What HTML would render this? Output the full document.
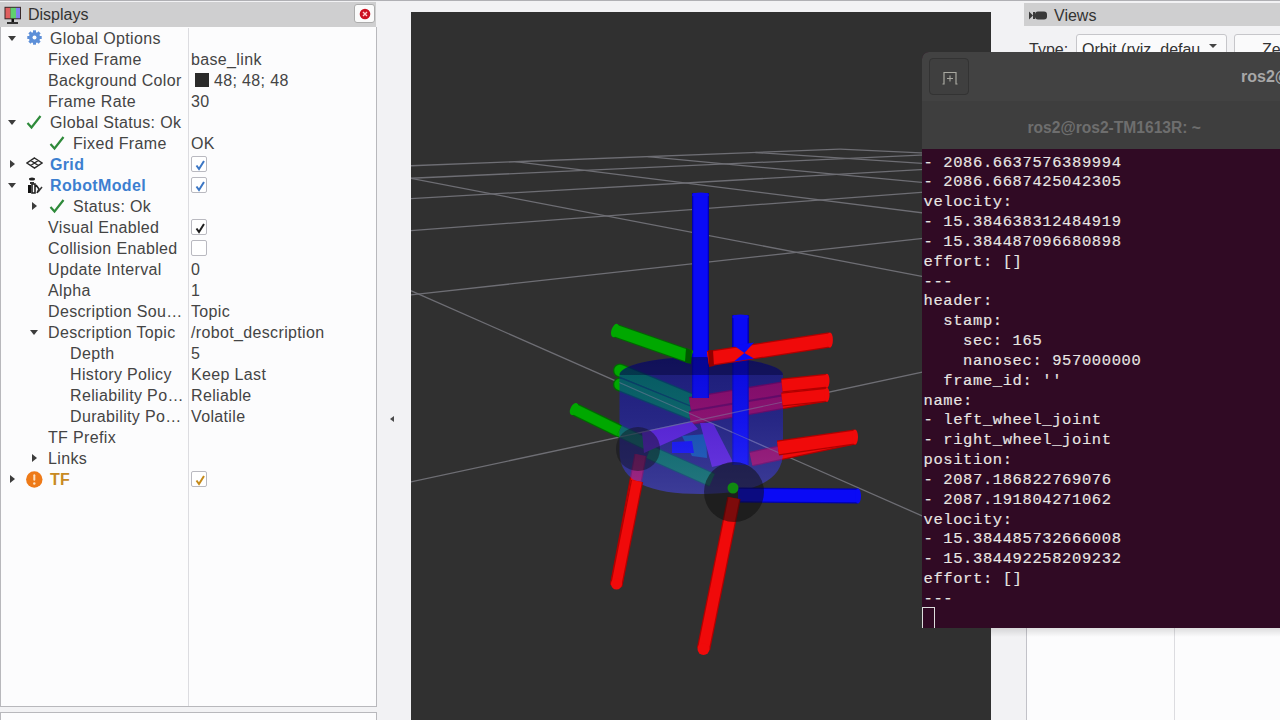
<!DOCTYPE html>
<html><head><meta charset="utf-8">
<style>
*{margin:0;padding:0;box-sizing:border-box}
html,body{width:1280px;height:720px;overflow:hidden;background:#f2f2f4;font-family:"Liberation Sans",sans-serif;position:relative}
.abs{position:absolute}
#disp{left:0;top:0;width:377px;height:720px}
#dhdr{left:0px;top:2px;width:376px;height:25.5px;background:#cfcfd0}
#dtree{left:0;top:27px;width:377px;height:680px;background:#fcfcfd;border:1px solid #b8b8bc;border-top:none}
#dbot{left:0;top:712px;width:377px;height:10px;background:#fcfcfd;border:1px solid #b8b8bc}
.row{position:absolute;left:0;height:21px;line-height:21px;font-size:16px;color:#444;white-space:nowrap;letter-spacing:0.35px}
.t{position:absolute;top:0}
.v{position:absolute;top:0;left:191px}
.b{font-weight:bold;color:#3c7fd0}
.arr-d{position:absolute;width:0;height:0;border-left:4px solid transparent;border-right:4px solid transparent;border-top:5px solid #3c3c3c;top:7.5px}
.arr-r{position:absolute;width:0;height:0;border-top:4.5px solid transparent;border-bottom:4.5px solid transparent;border-left:5px solid #3c3c3c;top:6px}
.chk{position:absolute;top:1.5px;left:191px;width:16px;height:16px;border:1px solid #b9b9c0;border-radius:2px;background:#fff}
.chk svg{position:absolute;left:2px;top:2px}
#view3d{left:411px;top:12px;width:580px;height:708px;background:#303030;overflow:hidden}
#term{left:922px;top:52px;width:358px;height:576px;background:#300a24;border-radius:7px 0 0 0;overflow:hidden}
#thdr{left:0;top:0;width:358px;height:97px;background:#3b3b3b}
.tl{position:absolute;left:1.5px;-webkit-text-stroke:0.15px #e8e6e3;font-family:"Liberation Mono",monospace;font-size:15.5px;letter-spacing:0.6px;color:#e8e6e3;white-space:pre;height:20px;line-height:20px}
</style></head><body>
<!-- Displays panel -->
<div class="abs" style="left:0;top:0;width:1280px;height:1px;background:#b0b0b4"></div>
<div id="dhdr" class="abs"></div>
<div id="dtree" class="abs"></div>
<div id="dbot" class="abs"></div>
<div class="abs" style="left:188px;top:28px;width:1px;height:678px;background:#dcdce0"></div>
<div class="abs" style="left:28px;top:6px;font-size:16px;color:#333;line-height:18px">Displays</div>
<svg class="abs" style="left:3px;top:6px" width="20" height="19" viewBox="0 0 20 19"><rect x="1.5" y="0.8" width="16.5" height="12.5" fill="#3a2a2a"/><rect x="2.5" y="1.8" width="5" height="10.5" fill="#e06060"/><rect x="7.5" y="1.8" width="5.5" height="10.5" fill="#60d070"/><rect x="13" y="1.8" width="4" height="10.5" fill="#8080ee"/><rect x="8.5" y="13" width="2.5" height="3" fill="#111"/><rect x="4" y="16" width="11" height="2" fill="#333"/></svg>
<div class="abs" style="left:354px;top:4px;width:21px;height:19px;background:#fbfbfb;border:1.5px solid #acacac;border-radius:3px"></div>
<svg class="abs" style="left:359px;top:7.5px" width="12" height="12" viewBox="0 0 12 12"><circle cx="6" cy="6" r="5.3" fill="#cc1020"/><path d="M4 4 L8 8 M8 4 L4 8" stroke="#ffd0d0" stroke-width="1.4"/></svg>
<div class="abs" style="left:390px;top:416px;width:0;height:0;border-top:3.75px solid transparent;border-bottom:3.75px solid transparent;border-right:4.5px solid #4a4a4a"></div>


<div id="rows" class="abs" style="left:0;top:0;width:376px;height:720px">
<div class="row" style="top:28px;width:376px"><i class="arr-d" style="left:8px"></i><svg class="abs" style="left:27px;top:2px" width="15" height="15" viewBox="0 0 15 15"><g fill="#5d8fd8"><circle cx="7.5" cy="7.5" r="5.6"/><rect x="6" y="0.3" width="3" height="3.2" transform="rotate(0 7.5 7.5)"/><rect x="6" y="0.3" width="3" height="3.2" transform="rotate(45 7.5 7.5)"/><rect x="6" y="0.3" width="3" height="3.2" transform="rotate(90 7.5 7.5)"/><rect x="6" y="0.3" width="3" height="3.2" transform="rotate(135 7.5 7.5)"/><rect x="6" y="0.3" width="3" height="3.2" transform="rotate(180 7.5 7.5)"/><rect x="6" y="0.3" width="3" height="3.2" transform="rotate(225 7.5 7.5)"/><rect x="6" y="0.3" width="3" height="3.2" transform="rotate(270 7.5 7.5)"/><rect x="6" y="0.3" width="3" height="3.2" transform="rotate(315 7.5 7.5)"/></g><circle cx="7.5" cy="7.5" r="2" fill="#fff"/></svg><span class="t" style="left:50px">Global Options</span></div>
<div class="row" style="top:49px;width:376px"><span class="t" style="left:48px">Fixed Frame</span><span class="v">base_link</span></div>
<div class="row" style="top:70px;width:376px"><span class="t" style="left:48px">Background Color</span><span class="v" style="left:214px">48; 48; 48</span><i class="abs" style="left:195px;top:3px;width:14px;height:14px;background:#2a2a2a"></i></div>
<div class="row" style="top:91px;width:376px"><span class="t" style="left:48px">Frame Rate</span><span class="v">30</span></div>
<div class="row" style="top:112px;width:376px"><i class="arr-d" style="left:8px"></i><svg class="abs" style="left:26px;top:2px" width="16" height="16" viewBox="0 0 16 16"><path d="M1.5 9 L5.5 13.5 L14.5 2" fill="none" stroke="#2e8a3a" stroke-width="2.2"/></svg><span class="t" style="left:50px">Global Status: Ok</span></div>
<div class="row" style="top:133px;width:376px"><svg class="abs" style="left:49px;top:2px" width="16" height="16" viewBox="0 0 16 16"><path d="M1.5 9 L5.5 13.5 L14.5 2" fill="none" stroke="#2e8a3a" stroke-width="2.2"/></svg><span class="t" style="left:73px">Fixed Frame</span><span class="v">OK</span></div>
<div class="row" style="top:154px;width:376px"><i class="arr-r" style="left:10px"></i><svg class="abs" style="left:26px;top:3px" width="17" height="12" viewBox="0 0 17 12"><path d="M8.5 1 L16 6 L8.5 11 L1 6 Z M4.75 3.5 L12.25 8.5 M12.25 3.5 L4.75 8.5" fill="none" stroke="#2a2a2a" stroke-width="1.5"/></svg><span class="t b" style="left:50px">Grid</span><i class="chk"><svg width="12" height="12" viewBox="0 0 12 12"><path d="M2.5 6.5 L5 10 L10 2" fill="none" stroke="#3b76c4" stroke-width="2"/></svg></i></div>
<div class="row" style="top:175px;width:376px"><i class="arr-d" style="left:8px"></i><svg class="abs" style="left:26px;top:1px" width="18" height="18" viewBox="0 0 18 18"><ellipse cx="6" cy="3" rx="3" ry="1.5" fill="#222"/><rect x="2" y="9" width="3" height="8" fill="#111"/><path d="M6 8 L9 8 L9 17 L6 17 Z M10 9 L13 13 L11 17" fill="none" stroke="#222" stroke-width="1.6"/><path d="M12 16 L16 11" stroke="#333" stroke-width="1.5"/><rect x="4" y="6" width="4" height="2" fill="#333"/></svg><span class="t b" style="left:50px">RobotModel</span><i class="chk"><svg width="12" height="12" viewBox="0 0 12 12"><path d="M2.5 6.5 L5 10 L10 2" fill="none" stroke="#3b76c4" stroke-width="2"/></svg></i></div>
<div class="row" style="top:196px;width:376px"><i class="arr-r" style="left:32px"></i><svg class="abs" style="left:49px;top:2px" width="16" height="16" viewBox="0 0 16 16"><path d="M1.5 9 L5.5 13.5 L14.5 2" fill="none" stroke="#2e8a3a" stroke-width="2.2"/></svg><span class="t" style="left:73px">Status: Ok</span></div>
<div class="row" style="top:217px;width:376px"><span class="t" style="left:48px">Visual Enabled</span><i class="chk"><svg width="12" height="12" viewBox="0 0 12 12"><path d="M2.5 6.5 L5 10 L10 2" fill="none" stroke="#1e1e1e" stroke-width="2"/></svg></i></div>
<div class="row" style="top:238px;width:376px"><span class="t" style="left:48px">Collision Enabled</span><i class="chk"></i></div>
<div class="row" style="top:259px;width:376px"><span class="t" style="left:48px">Update Interval</span><span class="v">0</span></div>
<div class="row" style="top:280px;width:376px"><span class="t" style="left:48px">Alpha</span><span class="v">1</span></div>
<div class="row" style="top:301px;width:376px"><span class="t" style="left:48px">Description Sou…</span><span class="v">Topic</span></div>
<div class="row" style="top:322px;width:376px"><i class="arr-d" style="left:30px"></i><span class="t" style="left:48px">Description Topic</span><span class="v">/robot_description</span></div>
<div class="row" style="top:343px;width:376px"><span class="t" style="left:70px">Depth</span><span class="v">5</span></div>
<div class="row" style="top:364px;width:376px"><span class="t" style="left:70px">History Policy</span><span class="v">Keep Last</span></div>
<div class="row" style="top:385px;width:376px"><span class="t" style="left:70px">Reliability Po…</span><span class="v">Reliable</span></div>
<div class="row" style="top:406px;width:376px"><span class="t" style="left:70px">Durability Po…</span><span class="v">Volatile</span></div>
<div class="row" style="top:427px;width:376px"><span class="t" style="left:48px">TF Prefix</span></div>
<div class="row" style="top:448px;width:376px"><i class="arr-r" style="left:32px"></i><span class="t" style="left:48px">Links</span></div>
<div class="row" style="top:469px;width:376px"><i class="arr-r" style="left:10px"></i><svg class="abs" style="left:26px;top:2px" width="17" height="17" viewBox="0 0 17 17"><circle cx="8.3" cy="8.5" r="8.2" fill="#ee7a18"/><rect x="7.3" y="3.3" width="2" height="6.5" rx="1" fill="#fde0c0"/><circle cx="8.3" cy="12.5" r="1.2" fill="#fde0c0"/></svg><span class="t b" style="left:50px;color:#c88a22">TF</span><i class="chk"><svg width="12" height="12" viewBox="0 0 12 12"><path d="M2.5 6.5 L5 10 L10 2" fill="none" stroke="#c58a1a" stroke-width="2"/></svg></i></div>
</div>

<!-- 3D view -->
<div id="view3d" class="abs"><svg class="abs" style="left:0;top:0" width="580" height="708" viewBox="411 12 580 708">
<g stroke="#6e6e74" stroke-width="1.3">
<line x1="405.0" y1="166.0" x2="840.0" y2="149.2"/>
<line x1="405.0" y1="178.5" x2="995.0" y2="151.7"/>
<line x1="405.0" y1="198.9" x2="995.0" y2="165.4"/>
<line x1="405.0" y1="231.0" x2="995.0" y2="186.9"/>
<line x1="405.0" y1="295.6" x2="995.0" y2="230.4"/>
<line x1="405.0" y1="483.1" x2="995.0" y2="356.5"/>
<line x1="405.0" y1="288.1" x2="995.0" y2="548.0"/>
<line x1="405.0" y1="177.3" x2="995.0" y2="290.4"/>
<line x1="515.3" y1="161.7" x2="995.0" y2="222.0"/>
<line x1="647.7" y1="156.6" x2="995.0" y2="189.3"/>
<line x1="755.5" y1="152.5" x2="995.0" y2="168.1"/>
<line x1="840.0" y1="149.2" x2="995.0" y2="156.3"/>
</g>
<g fill="none"><line x1="620" y1="370.5" x2="691" y2="400" stroke="#006a00" stroke-width="14" stroke-linecap="round"/><line x1="620" y1="370.5" x2="691" y2="400" stroke="#00a800" stroke-width="11.5" stroke-linecap="round"/><line x1="620" y1="384.5" x2="691" y2="413" stroke="#006a00" stroke-width="14" stroke-linecap="round"/><line x1="620" y1="384.5" x2="691" y2="413" stroke="#00a800" stroke-width="11.5" stroke-linecap="round"/><line x1="690" y1="404" x2="827" y2="380.8" stroke="#b00000" stroke-width="14" stroke-linecap="butt"/><line x1="690" y1="404" x2="827" y2="380.8" stroke="#f00a0a" stroke-width="11.5" stroke-linecap="butt"/><line x1="690" y1="418" x2="827" y2="394.7" stroke="#b00000" stroke-width="14" stroke-linecap="butt"/><line x1="690" y1="418" x2="827" y2="394.7" stroke="#f00a0a" stroke-width="11.5" stroke-linecap="butt"/><line x1="576" y1="410" x2="655" y2="448" stroke="#006a00" stroke-width="13" stroke-linecap="butt"/><line x1="576" y1="410" x2="655" y2="448" stroke="#00a800" stroke-width="10.5" stroke-linecap="butt"/><line x1="649" y1="452" x2="712" y2="480" stroke="#006a00" stroke-width="15" stroke-linecap="butt"/><line x1="649" y1="452" x2="712" y2="480" stroke="#00a800" stroke-width="12.5" stroke-linecap="butt"/><line x1="751" y1="459" x2="855" y2="437" stroke="#b00000" stroke-width="15" stroke-linecap="butt"/><line x1="751" y1="459" x2="855" y2="437" stroke="#f00a0a" stroke-width="12.5" stroke-linecap="butt"/><polygon points="682,436 706,434 707,458 692,456" fill="#128080"/><polygon points="672,442 692,441 694,453 672,453" fill="#1010f0"/><polygon points="642,432 644,453 698,429 692,422" fill="#8c2cc4"/><polygon points="700,423 713,423 733,462 712,467" fill="#8c2cc4"/><line x1="640.5" y1="455" x2="616" y2="586" stroke="#b00000" stroke-width="12.5" stroke-linecap="butt"/><line x1="640.5" y1="455" x2="616" y2="586" stroke="#f00a0a" stroke-width="10.0" stroke-linecap="butt"/><line x1="740.5" y1="315" x2="740.5" y2="465" stroke="#0000b0" stroke-width="16.5" stroke-linecap="butt"/><line x1="740.5" y1="315" x2="740.5" y2="465" stroke="#0a0af5" stroke-width="14.0" stroke-linecap="butt"/><line x1="700.5" y1="193" x2="700.5" y2="398" stroke="#0000b0" stroke-width="17" stroke-linecap="butt"/><line x1="700.5" y1="193" x2="700.5" y2="398" stroke="#0a0af5" stroke-width="14.5" stroke-linecap="butt"/></g>
<defs><linearGradient id="bg1" x1="0" y1="0" x2="0" y2="1"><stop offset="0" stop-color="#0808c0" stop-opacity="0.5"/><stop offset="0.45" stop-color="#1c1ce0" stop-opacity="0.48"/><stop offset="1" stop-color="#4848ff" stop-opacity="0.5"/></linearGradient></defs><path d="M619.5,375 A81.75,18 0 0 1 783,375 L783,452 C783,482 752,494 701,494 C650,494 619.5,482 619.5,452 Z" fill="url(#bg1)"/>
<path d="M619.5,375 A81.75,18 0 0 1 783,375 Z" fill="#00002a" fill-opacity="0.4"/>
<clipPath id="bc"><path d="M619.5,375 A81.75,18 0 0 1 783,375 L783,452 C783,482 752,494 701,494 C650,494 619.5,482 619.5,452 Z"/></clipPath><g stroke="#8080a0" stroke-width="1.1" stroke-opacity="0.5" clip-path="url(#bc)">
<line x1="405.0" y1="166.0" x2="840.0" y2="149.2"/>
<line x1="405.0" y1="178.5" x2="995.0" y2="151.7"/>
<line x1="405.0" y1="198.9" x2="995.0" y2="165.4"/>
<line x1="405.0" y1="231.0" x2="995.0" y2="186.9"/>
<line x1="405.0" y1="295.6" x2="995.0" y2="230.4"/>
<line x1="405.0" y1="483.1" x2="995.0" y2="356.5"/>
<line x1="405.0" y1="288.1" x2="995.0" y2="548.0"/>
<line x1="405.0" y1="177.3" x2="995.0" y2="290.4"/>
<line x1="515.3" y1="161.7" x2="995.0" y2="222.0"/>
<line x1="647.7" y1="156.6" x2="995.0" y2="189.3"/>
<line x1="755.5" y1="152.5" x2="995.0" y2="168.1"/>
<line x1="840.0" y1="149.2" x2="995.0" y2="156.3"/>
</g>
<g fill="none"><line x1="700.5" y1="195" x2="700.5" y2="357" stroke="#0000b0" stroke-width="17" stroke-linecap="butt"/><line x1="700.5" y1="195" x2="700.5" y2="357" stroke="#0a0af5" stroke-width="14.5" stroke-linecap="butt"/><ellipse cx="700.5" cy="195" rx="8.5" ry="2.5" fill="#0a0af5"/><line x1="740.5" y1="317" x2="740.5" y2="357" stroke="#0000b0" stroke-width="16.5" stroke-linecap="butt"/><line x1="740.5" y1="317" x2="740.5" y2="357" stroke="#0a0af5" stroke-width="14.0" stroke-linecap="butt"/><ellipse cx="740.5" cy="317" rx="8.2" ry="2.5" fill="#0a0af5"/><line x1="615" y1="330.5" x2="691" y2="357" stroke="#006a00" stroke-width="14" stroke-linecap="butt"/><line x1="615" y1="330.5" x2="691" y2="357" stroke="#00a800" stroke-width="11.5" stroke-linecap="butt"/><ellipse cx="615" cy="330.5" rx="3.5" ry="7" fill="#00a800" transform="rotate(19 615 330.5)"/><polygon points="686,348 692,351 691,364 685,362" fill="#005800"/><line x1="708" y1="358.6" x2="829.9" y2="339.9" stroke="#b00000" stroke-width="15.5" stroke-linecap="butt"/><line x1="708" y1="358.6" x2="829.9" y2="339.9" stroke="#f00a0a" stroke-width="13.0" stroke-linecap="butt"/><ellipse cx="829.9" cy="339.9" rx="3" ry="7.5" fill="#f00a0a"/><polygon points="734,345.5 754,342.5 744.4,353" fill="#0a0af5"/><polygon points="734,361.5 754,358.5 744.4,353" fill="#0a0af5"/><polygon points="708,350.5 713,350 714,366 709,367" fill="#900000"/><line x1="782" y1="385.5" x2="827" y2="380.8" stroke="#b00000" stroke-width="14" stroke-linecap="butt"/><line x1="782" y1="385.5" x2="827" y2="380.8" stroke="#f00a0a" stroke-width="11.5" stroke-linecap="butt"/><line x1="782" y1="399.5" x2="827" y2="394.7" stroke="#b00000" stroke-width="14" stroke-linecap="butt"/><line x1="782" y1="399.5" x2="827" y2="394.7" stroke="#f00a0a" stroke-width="11.5" stroke-linecap="butt"/><ellipse cx="827" cy="380.8" rx="2.5" ry="7" fill="#f00a0a"/><ellipse cx="827" cy="394.7" rx="2.5" ry="7" fill="#f00a0a"/><line x1="574" y1="409" x2="619" y2="431" stroke="#006a00" stroke-width="13" stroke-linecap="butt"/><line x1="574" y1="409" x2="619" y2="431" stroke="#00a800" stroke-width="10.5" stroke-linecap="butt"/><ellipse cx="574" cy="409" rx="3.5" ry="6.5" fill="#00a800" transform="rotate(26 574 409)"/><line x1="778" y1="448" x2="855" y2="437" stroke="#b00000" stroke-width="15" stroke-linecap="butt"/><line x1="778" y1="448" x2="855" y2="437" stroke="#f00a0a" stroke-width="12.5" stroke-linecap="butt"/><ellipse cx="855" cy="437" rx="3" ry="7.5" fill="#f00a0a"/><line x1="637" y1="481" x2="616.5" y2="584" stroke="#b00000" stroke-width="12.5" stroke-linecap="butt"/><line x1="637" y1="481" x2="616.5" y2="584" stroke="#f00a0a" stroke-width="10.0" stroke-linecap="butt"/><circle cx="616.5" cy="584" r="5.5" fill="#f00a0a"/><line x1="738" y1="495" x2="858" y2="496" stroke="#0000b0" stroke-width="15" stroke-linecap="butt"/><line x1="738" y1="495" x2="858" y2="496" stroke="#0a0af5" stroke-width="12.5" stroke-linecap="butt"/><ellipse cx="858" cy="496" rx="3" ry="7.5" fill="#0a0af5"/><line x1="734" y1="498" x2="703.5" y2="649" stroke="#b00000" stroke-width="13.5" stroke-linecap="butt"/><line x1="734" y1="498" x2="703.5" y2="649" stroke="#f00a0a" stroke-width="11.0" stroke-linecap="butt"/><circle cx="703.5" cy="649" r="6" fill="#f00a0a"/></g>
<circle cx="638" cy="449" r="22" fill="#101018" fill-opacity="0.45"/><circle cx="734" cy="492" r="30" fill="#0c0c0c" fill-opacity="0.5"/><circle cx="733" cy="488" r="5.5" fill="#108a10"/>
</svg></div>

<!-- right panel -->
<div class="abs" style="left:1024px;top:2.5px;width:256px;height:23.5px;background:#cfcfd0"></div>
<svg class="abs" style="left:1029px;top:11px" width="19" height="9" viewBox="0 0 19 9"><path d="M0 0.5 L4 4.5 L0 8.5 Z" fill="#3a3a3a"/><rect x="4" y="1" width="2" height="7" fill="#3a3a3a"/><rect x="6" y="0.5" width="12" height="8" rx="3" fill="#3a3a3a"/></svg>
<div class="abs" style="left:1054px;top:7px;font-size:16px;color:#333;line-height:18px">Views</div>
<div class="abs" style="left:1029px;top:40.5px;font-size:16px;color:#333;line-height:18px">Type:</div>
<div class="abs" style="left:1076px;top:34px;width:151px;height:26px;background:#fafafb;border:1px solid #c6c6ca;border-radius:3px;font-size:16px;color:#333;line-height:22px;padding-left:5px;padding-top:3.5px;overflow:hidden;white-space:nowrap"><span style="display:inline-block;width:118px;overflow:hidden">Orbit (rviz_default</span></div><div class="abs" style="left:1209px;top:44px;width:0;height:0;border-left:4px solid transparent;border-right:4px solid transparent;border-top:4px solid #444"></div>
<div class="abs" style="left:1234px;top:34px;width:60px;height:26px;background:#fafafb;border:1px solid #c6c6ca;border-radius:3px;font-size:16px;color:#333;line-height:22px;padding-left:27px;padding-top:3.5px">Ze</div>
<div class="abs" style="left:1025.5px;top:620px;width:254.5px;height:100px;background:#fcfcfd;border-left:1px solid #c2c2c8"></div>
<div class="abs" style="left:1174px;top:620px;width:1px;height:100px;background:#dcdce0"></div>

<div class="abs" style="left:991px;top:628px;width:289px;height:9px;background:linear-gradient(rgba(0,0,0,0.12),rgba(0,0,0,0))"></div>
<!-- terminal -->
<div id="term" class="abs">
<div class="abs" style="left:0;top:0;width:358px;height:49px;background:#424242"></div>
<div class="abs" style="left:0;top:49px;width:358px;height:48px;background:#3e3e3e"></div>
<div class="abs" style="left:7px;top:6px;width:40px;height:37px;background:#3f3f3f;border:1px solid #333;border-radius:4px"></div>
<svg class="abs" style="left:19px;top:19px" width="18" height="14" viewBox="0 0 18 14"><path d="M1.5 13 H3 V1.5 H15 V13 H16.5" fill="none" stroke="#a8a8a0" stroke-width="1.2"/><path d="M9 4.5 V10.5 M6 7.5 H12" stroke="#a8a8a0" stroke-width="1.1"/></svg>
<div class="abs" style="left:319px;top:16px;font-size:16px;font-weight:bold;color:#a8a8a8;line-height:18px;white-space:nowrap">ros2@ros2-TM1613R: ~</div>
<div class="abs" style="left:105.5px;top:66.5px;font-size:15.6px;font-weight:bold;color:#6e6e6e;line-height:18px;white-space:nowrap">ros2@ros2-TM1613R: ~</div>
<div class="tl" style="top:100.6px">- 2086.6637576389994</div>
<div class="tl" style="top:120.4px">- 2086.6687425042305</div>
<div class="tl" style="top:140.3px">velocity:</div>
<div class="tl" style="top:160.1px">- 15.384638312484919</div>
<div class="tl" style="top:179.9px">- 15.384487096680898</div>
<div class="tl" style="top:199.8px">effort: []</div>
<div class="tl" style="top:219.6px">---</div>
<div class="tl" style="top:239.4px">header:</div>
<div class="tl" style="top:259.2px">  stamp:</div>
<div class="tl" style="top:279.1px">    sec: 165</div>
<div class="tl" style="top:298.9px">    nanosec: 957000000</div>
<div class="tl" style="top:318.7px">  frame_id: ''</div>
<div class="tl" style="top:338.6px">name:</div>
<div class="tl" style="top:358.4px">- left_wheel_joint</div>
<div class="tl" style="top:378.2px">- right_wheel_joint</div>
<div class="tl" style="top:398.0px">position:</div>
<div class="tl" style="top:417.9px">- 2087.186822769076</div>
<div class="tl" style="top:437.7px">- 2087.191804271062</div>
<div class="tl" style="top:457.5px">velocity:</div>
<div class="tl" style="top:477.4px">- 15.384485732666008</div>
<div class="tl" style="top:497.2px">- 15.384492258209232</div>
<div class="tl" style="top:517.0px">effort: []</div>
<div class="tl" style="top:536.9px">---</div>
<div class="abs" style="left:0;top:555px;width:13px;height:22px;border:1.5px solid #ddd"></div>
</div>
</body></html>
